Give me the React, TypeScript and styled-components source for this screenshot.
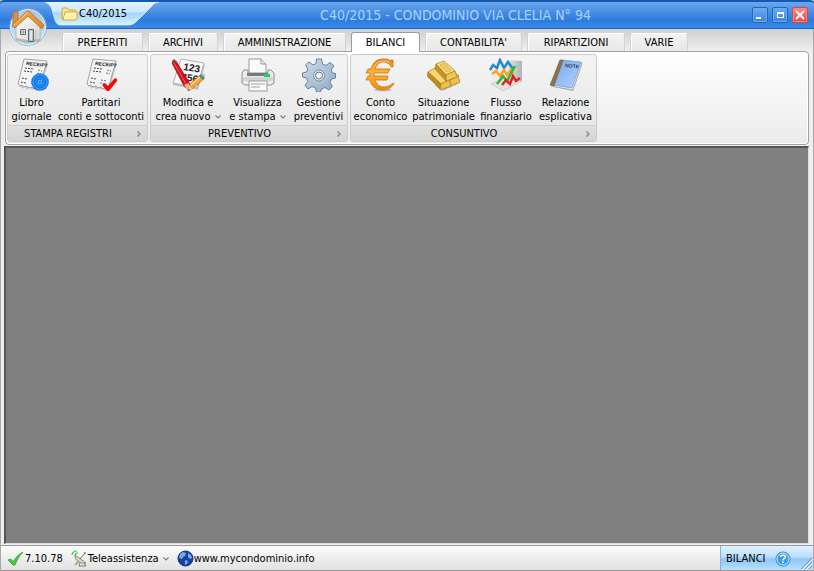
import React from "react";
import styled, { createGlobalStyle, css } from "styled-components";

const GlobalStyle = createGlobalStyle`
  * { box-sizing: border-box; }
  html, body, #root { height: 100%; margin: 0; }
  body {
    background: #efefef;
    color: #000;
    font: 11px/14px "DejaVu Sans Condensed", "Noto Sans", sans-serif;
    overflow: hidden;
  }
  button { font: inherit; color: inherit; border: 0; background: none; padding: 0; margin: 0; }
  a { color: inherit; text-decoration: none; }
  svg { display: block; flex: none; }
`;

const Window = styled.div`
  display: flex;
  flex-direction: column;
  min-height: 100vh;
  border-left: 1px solid #a9a9a9;
  border-right: 1px solid #a9a9a9;
  background: #efefef;
`;

const TitleBar = styled.header`
  position: relative;
  display: flex;
  align-items: center;
  height: 29px;
  margin: 0 -1px;
  padding: 0 6px 0 45px;
  border-top: 2px solid #1458b0;
  border-bottom: 1px solid #1764cc;
  border-radius: 4px 4px 0 0;
  background: linear-gradient(#6ba8ee 0%, #4a90e4 35%, #2d7cdc 70%, #3b8ae8 100%);
`;

const DocumentTab = styled.div`
  position: relative;
  align-self: flex-start;
  flex: none;
  display: flex;
  align-items: center;
  gap: 1px;
  width: 114px;
  height: 23px;
  padding-left: 16px;
`;

const TabShape = styled.svg`
  position: absolute;
  left: 0;
  top: 0;
  z-index: 0;
`;

const DocumentName = styled.span`
  position: relative;
  z-index: 1;
`;

const FolderSlot = styled.span`
  position: relative;
  z-index: 1;
`;

const WindowTitle = styled.h1`
  flex: 1;
  margin: 0;
  color: #a9d1fb;
  font: 400 14px/18px "DejaVu Sans Condensed", sans-serif;
  text-align: center;
  white-space: nowrap;
`;

const WindowControls = styled.div`
  display: flex;
  gap: 4px;
`;

const ControlButton = styled.button<{ $danger?: boolean }>`
  display: grid;
  place-items: center;
  width: 16px;
  height: 16px;
  border: 1px solid ${(p) => (p.$danger ? "#c84a58" : "#2264b8")};
  border-radius: 2px;
  background: ${(p) =>
    p.$danger ? "linear-gradient(#ff8a84, #ee3c3c)" : "linear-gradient(#6cabee, #3884dc)"};
  box-shadow: inset 0 0 0 1px ${(p) => (p.$danger ? "#ff8080" : "#6cabf0")};
`;

const HomeButton = styled.button`
  position: absolute;
  left: 9px;
  top: 6px;
  width: 38px;
  height: 38px;
  z-index: 2;
`;

const TabStrip = styled.nav`
  display: flex;
  align-items: flex-end;
  gap: 5px;
  height: 22px;
  padding-left: 61px;
  background: linear-gradient(#cfcfcf, #efefef);
`;

const RibbonTab = styled.button<{ $width: number; $active?: boolean }>`
  flex: none;
  width: ${(p) => p.$width}px;
  height: 18px;
  border: 1px solid #d2d2d2;
  border-top-color: #fff;
  border-bottom: 0;
  border-radius: 3px 3px 0 0;
  background: linear-gradient(#f2f2f2, #e8e8e8);
  box-shadow: inset 1px 0 #fff;
  text-align: center;
  white-space: nowrap;
  ${(p) =>
    p.$active &&
    css`
      position: relative;
      z-index: 1;
      height: 20px;
      margin-bottom: -1px;
      border-color: #9c9c9c;
      background: #fff;
    `}
`;

const Ribbon = styled.section`
  display: flex;
  gap: 2px;
  margin: 0 4px;
  padding: 2px 1px;
  border: 1px solid #a2a2a2;
  border-radius: 4px;
  background: linear-gradient(#fff, #ebebeb);
  box-shadow: inset 0 0 0 1px #fff;
`;

const Group = styled.div`
  display: flex;
  flex-direction: column;
  border: 1px solid #cbcbcb;
  border-radius: 3px;
  overflow: hidden;
  background: linear-gradient(#f4f4f4, #e5e5e5);
`;

const GroupItems = styled.div`
  display: flex;
  height: 70px;
`;

const Command = styled.button<{ $width: number }>`
  position: relative;
  display: flex;
  flex-direction: column;
  align-items: center;
  gap: 4px;
  width: ${(p) => p.$width}px;
  padding-top: 3px;
  white-space: nowrap;

  & + &::before {
    content: "";
    position: absolute;
    left: 0;
    top: 2px;
    bottom: 3px;
    border-left: 1px solid #bdbdbd;
  }
`;

const CommandLabel = styled.span`
  display: flex;
  flex-direction: column;
  align-items: center;
`;

const LabelLine = styled.span`
  display: flex;
  align-items: center;
  justify-content: center;
  gap: 4px;
`;

const GroupCaption = styled.button`
  display: flex;
  align-items: center;
  height: 16px;
  padding-right: 5px;
  border-top: 1px solid #cdcdcd;
  background: linear-gradient(#e0e0e0, #d4d4d4);
`;

const CaptionText = styled.span`
  flex: 1;
  padding-right: 8px;
`;

const Workspace = styled.main`
  flex: 1;
  margin: 1px 4px 0 3px;
  border: 2px solid #555;
  border-right: 1px solid #ddd;
  border-bottom: 1px solid #ddd;
  background: #808080;
`;

const StatusBar = styled.footer`
  display: flex;
  align-items: stretch;
  justify-content: space-between;
  height: 26px;
  margin-top: 1px;
  border-top: 1px solid #999;
  border-bottom: 1px solid #9a9a9a;
  background: linear-gradient(#fbfbfb, #e2e2e2);
`;

const StatusItems = styled.div`
  display: flex;
  align-items: center;
  gap: 8px;
  padding: 1px 0 0 6px;
`;

const statusEntry = css`
  display: flex;
  align-items: center;
`;
const StatusText = styled.span`${statusEntry}`;
const StatusButton = styled.button`${statusEntry}`;
const StatusLink = styled.a`${statusEntry}`;

const MenuMark = styled.span`
  padding-left: 4px;
`;

const ModulePanel = styled.div`
  display: flex;
  align-items: center;
  width: 93px;
  padding: 1px 0 0 5px;
  border-left: 1px solid #7fb3e6;
  background: linear-gradient(#e0f1ff, #bcdffc 45%, #92c5f7 55%, #b6e0ff);
`;

const HelpButton = styled.button`
  margin-left: auto;
`;

const Grip = styled.svg`
  align-self: flex-end;
  margin-left: 8px;
`;

const Chevron = ({ down = false }: { down?: boolean }) => (
  <svg width="6" height="6" viewBox="0 0 6 6" fill="none" stroke="#808080" strokeWidth="1.2">
    <path d={down ? "M.5 1.5 3 4l2.500-2.500" : "M1.500.5 4 3 1.500 5.500"} />
  </svg>
);

const Folder = () => (
  <svg width="17" height="14" viewBox="0 0 17 14">
    <path d="M1 12V2l1-1h4l2 2h6l1 1v8z" fill="#ffe493" stroke="#d4a32d" />
    <path d="M2 13 4 5h12v7l-1 1z" fill="#fff0a8" stroke="#d9a934" />
    <path d="M4 11 5.500 6.500H15" fill="none" stroke="#fffbdc" />
  </svg>
);

const House = () => (
  <svg width="38" height="38" viewBox="0 0 38 38">
    <defs>
      <linearGradient id="orb" x2="0" y2="1">
        <stop stopColor="#a4c4e8" />
        <stop offset=".45" stopColor="#bcd6f2" />
        <stop offset="1" stopColor="#a9ecff" />
      </linearGradient>
      <linearGradient id="roof" x2="1" y2="1">
        <stop stopColor="#f3ae55" />
        <stop offset="1" stopColor="#d98422" />
      </linearGradient>
      <linearGradient id="wall" x2="1" y2="1">
        <stop stopColor="#ffffff" />
        <stop offset="1" stopColor="#d3d3d0" />
      </linearGradient>
    </defs>
    <circle cx="19" cy="19" r="17.500" fill="url(#orb)" stroke="#eef7ff" />
    <circle cx="19" cy="19" r="18.400" fill="none" stroke="#7aa6d0" strokeWidth=".7" />
    <path d="M7 17 19 6l12 11v16l-13 2-11-3z" fill="url(#wall)" stroke="#a9a9a6" strokeWidth=".8" />
    <path d="m7 30 11 2 13-1v2l-13 2-11-3z" fill="#b5b5b2" />
    <path d="M4 4h5v9l-5 4z" fill="#d8913c" stroke="#a96d25" strokeWidth=".7" />
    <path d="M3 18 18 3h2l15 14-2 4L19 8 6 20z" fill="url(#roof)" stroke="#b87022" strokeWidth=".8" />
    <path d="M5 17 18.500 4.500" stroke="#ffd391" strokeWidth="1" />
    <path d="M11.500 21.500h5v5h-5z" fill="#f2f4f5" stroke="#6a6a6a" />
    <path d="M14 22v4m-2-2h4" stroke="#909090" />
    <path d="M19.500 21.500h5v12h-5z" fill="#b8c3ca" stroke="#63686b" />
    <path d="M22 23v9" stroke="#eef4f7" strokeWidth="1.500" />
    <path d="M27 22v10" stroke="#b9b9b6" />
  </svg>
);

const ReceiptPaper = () => (
  <>
    <path d="m9 2 24 3-8 28-2-2-2 2-2-2-2 1-2-2-3 2-2-3-3 2-1-3-2 1z" fill="#8e8e8e" opacity=".4" />
    <path d="m9 1 23 2-8 28-2-2-3 2-2-2-3 1-2-2-3 1-2-2-2 1-2-2z" fill="#f4f4f4" stroke="#8e8e8e" strokeWidth=".8" />
    <text x="11" y="7" transform="rotate(6 11 7)" fill="#222" fontFamily="Liberation Sans" fontSize="5" fontWeight="700">RECEIPT</text>
    <path d="m10 10 8 1m-9 2 8 1M7 20l5 1m-6 3 5 1" stroke="#444" strokeDasharray="2 1" />
    <path d="m23 12 4 1m-5 2 4 1m-9 6 6 1m-7 2 6 1" stroke="#777" strokeDasharray="2 1" />
  </>
);

const LedgerIcon = () => (
  <svg width="34" height="34" viewBox="0 0 34 34" fill="none">
    <ReceiptPaper />
    <circle cx="25" cy="24" r="8.800" fill="#1178ec" />
    <circle cx="25" cy="24" r="7" stroke="#3a9cff" strokeWidth="1.200" />
    <circle cx="25" cy="24" r="4" stroke="#3492f5" />
    <path d="M23.500 22.500h3v3h-3z" stroke="#5cb2ff" />
  </svg>
);

const CheckedLedgerIcon = () => (
  <svg width="34" height="34" viewBox="0 0 34 34" fill="none">
    <ReceiptPaper />
    <path d="m18 27 3-2 3 3 7-8 2 1v2l-8 10h-2z" fill="#f20a0a" />
  </svg>
);

const EditIcon = () => (
  <svg width="34" height="34" viewBox="0 0 34 34" fill="none">
    <path d="m10 3 24 4-7 25-25-5z" fill="#888" opacity=".45" />
    <path d="m10 1 23 4-7 25-24-5z" fill="#f8f8f8" stroke="#b0b0b0" />
    <g fill="#222" fontFamily="Liberation Sans" fontSize="10" fontWeight="700">
      <text x="12" y="12" transform="rotate(9 12 12)">123</text>
      <text x="10" y="22" transform="rotate(9 10 22)">456</text>
    </g>
    <path d="m1 5 4-2 14 23-1 6-5-4z" fill="#d81020" stroke="#a00818" strokeWidth=".7" />
    <path d="m3 5 12 21" stroke="#ff5a62" />
    <path d="m13 27 5-2v8z" fill="#e8c28e" />
    <path d="m1 5 0-2 2-2 2 2-4 3z" fill="#8b4b30" />
    <path d="m17 33 1-6 11-10 4 4-12 10z" fill="#f1a33c" stroke="#b97421" strokeWidth=".7" />
    <path d="m20 27 9-8" stroke="#ffd47e" strokeWidth="1.500" />
    <path d="m28 18 2-2 4 4-2 2z" fill="#3f8d9d" />
    <path d="m30 16 2-1 2 2v2z" fill="#a4cf8e" />
    <path d="m17 33 1-6 3 4z" fill="#f1d3a0" />
    <path d="m17 33 .5-2 1.500 1z" fill="#4c4038" />
  </svg>
);

const PrinterIcon = () => (
  <svg width="34" height="34" viewBox="0 0 34 34">
    <path d="M8 1h12l5 5v12H8z" fill="#fafafa" stroke="#999" />
    <path d="M20 1v5h5" fill="#e4e4e4" stroke="#999" />
    <path d="M3 12h4v3h20v-3h3l3 3v10l-3 2H4l-3-2V15z" fill="#ececec" stroke="#8e8e8e" />
    <path d="M2 19h30v4H2z" fill="#d2d4d5" />
    <path d="M6 15h21v3H6z" fill="#747b7e" />
    <path d="M23 16h6v3h-6z" fill="#18d653" />
    <path d="M8 23h18v10H8z" fill="#fafafa" stroke="#999" />
    <path d="M10 26h14m-14 3h9" stroke="#a0a0a0" />
  </svg>
);

const GearIcon = () => (
  <svg width="34" height="34" viewBox="0 0 34 34">
    <defs><linearGradient id="steel" x2="1" y2="1">
      <stop stopColor="#d0ddea" /><stop offset="1" stopColor="#8fa8c1" />
    </linearGradient></defs>
    <path d="M14.500 1h5l1 5 3.500 1.500 4-3L32 8l-3 4 1.500 3 3 .5v4.500l-4 1-1.500 3.500 2.500 4-3.500 3.500-4-2.500-3.500 1.500-1 3h-4l-1-4-3.500-1.500-4 2.500L3 27.500l3-4L4.500 20l-4-1v-4l4-1L6 11 3.500 7 7 4l4 3 3-1.500z" fill="url(#steel)" stroke="#66809b" strokeLinejoin="round" />
    <circle cx="17" cy="17.500" r="8" fill="none" stroke="#b9cadb" />
    <circle cx="17" cy="17.500" r="5.500" fill="#dfe8f1" stroke="#7891ac" />
    <circle cx="17" cy="17.500" r="3.500" fill="#f1f1f1" stroke="#5f7792" />
  </svg>
);

const EuroIcon = () => (
  <svg width="34" height="34" viewBox="0 0 34 34">
    <defs><linearGradient id="euro" x2="0" y2="1">
      <stop stopColor="#e98518" /><stop offset=".45" stopColor="#ffb52c" /><stop offset="1" stopColor="#ee8b16" />
    </linearGradient></defs>
    <ellipse cx="19" cy="32" rx="9" ry="1.500" fill="#8d8d8d" opacity=".5" />
    <path d="M29 2v7h-2C25 4 21 4 18 4c-4 1-6 4-7 7h15l-2 4H10v3h14l-1 4H11c2 5 5 7 9 7 3 0 6-1 9-4l1 1c-3 4-7 6-12 6-7-1-11-4-12-10H2l2-4h2v-3H2l2-4h3C9 4 13 1 19 1c3 0 6 0 7 2l1-1z" fill="url(#euro)" stroke="#cf720f" strokeWidth=".8" />
    <path d="M25 4c-8-3-14 1-16 7" fill="none" stroke="#ffdc7c" strokeWidth=".8" />
  </svg>
);

const GoldIcon = () => (
  <svg width="34" height="34" viewBox="0 0 34 34" stroke="#a87b1c" strokeWidth=".7" strokeLinejoin="round">
    <path d="m8 28 19-4 6 1-17 8z" fill="#777" opacity=".4" stroke="none" />
    <path d="m16 11 6-2 10 9-8 4z" fill="#f5d66f" />
    <path d="m23 22 8-4 2 6-10 4z" fill="#efc04a" />
    <path d="m1 14 7-4 14 12-8 4z" fill="#f5d871" />
    <path d="m1 14 13 12-1 5L0 18z" fill="#c08a20" />
    <path d="m14 26 8-4 2 6-11 4z" fill="#efc04a" />
    <path d="m9 6 8-3 11 10-9 4z" fill="#f9df82" />
    <path d="m9 6 10 11v6L8 11z" fill="#c8922a" />
    <path d="m19 17 9-4 2 6-11 4z" fill="#f2c855" />
    <path d="m13 7 4-2 7 7-4 2z" fill="#eccb61" stroke="#d3ab42" />
  </svg>
);

const FlowIcon = () => (
  <svg width="34" height="34" viewBox="0 0 34 34" fill="none">
    <defs><linearGradient id="chartWall"><stop stopColor="#f4f4f4" /><stop offset="1" stopColor="#b2b2b2" /></linearGradient></defs>
    <path d="m4 5 12-3v20L2 26z" fill="#ececec" />
    <path d="m15 2 18 1v20l-18-1z" fill="url(#chartWall)" />
    <path d="m2 26 13-5 18 2-19 10z" fill="#e2e2e2" stroke="#bbb" strokeWidth=".6" />
    <g strokeWidth="2.500">
      <path d="m1 12 3-5 4 3 3-8 4 8 4-6 5 7" stroke="#248cc8" />
      <path d="m3 16 4-3 4 5 4-6 3 5 4-5 2 3" stroke="#ff9f20" />
      <path d="m8 26 6-8 4 5 8-15" stroke="#33b532" />
      <path d="m13 27 4-5 4 4 3-8 3 5 4-3" stroke="#dc2626" />
    </g>
  </svg>
);

const BookIcon = () => (
  <svg width="34" height="34" viewBox="0 0 34 34">
    <defs><linearGradient id="cover" x2="1" y2="1"><stop stopColor="#76a7ec" /><stop offset="1" stopColor="#b4d2fb" /></linearGradient></defs>
    <path d="m4 29 20 4 9-26-3-1z" fill="#777" opacity=".45" />
    <path d="m11 2 22 3-9 27-22-4z" fill="#efefef" stroke="#8f9aa8" strokeWidth=".7" />
    <path d="m13 2 19 2-9 26-19-3z" fill="url(#cover)" stroke="#6f96cf" strokeWidth=".7" />
    <path d="m11 2 3 .4L5 28l-4-1z" fill="#8b7347" stroke="#6f5a36" strokeWidth=".5" />
    <text x="16" y="9" transform="rotate(6 16 9)" fill="#30405c" fontFamily="Liberation Sans" fontSize="5" fontWeight="700">NOTE</text>
  </svg>
);

const CheckIcon = () => (
  <svg width="18" height="16" viewBox="0 0 18 16"><path d="m1 9 3-1 2 3c3-5 6-8 10-10-4 4-6 8-8 13H6z" fill="#4ccc48" stroke="#1f8f24" strokeWidth=".7" /></svg>
);
const SatelliteIcon = () => (
  <svg width="17" height="17" viewBox="0 0 17 17" fill="none">
    <path d="M4 5c0 6 5 9 11 8z" fill="#dedac0" stroke="#77776e" strokeWidth=".8" />
    <path d="m9 9 5-6M9 13l-1 3h7l-2-3" stroke="#77776e" />
    <path d="m4 15 4-4" stroke="#aaa58c" strokeWidth="2" />
    <circle cx="14" cy="3" r="1" fill="#8b8770" />
    <path d="M4 6c0-2 1-3 3-3M1 5c0-2 2-4 5-4" stroke="#39c943" strokeWidth="1.200" />
  </svg>
);
const GlobeIcon = () => (
  <svg width="17" height="17" viewBox="0 0 17 17">
    <circle cx="8.500" cy="8.500" r="7.500" fill="#1741a8" stroke="#0d2c7c" />
    <path d="m3 4 3-2 3 1-1 3-2 1-1 2-3-1zm8-1 3 2 1 3-2 1-2-2zM8 10l3 1-1 3-2 1z" fill="#7fa8e6" />
  </svg>
);
const HelpIcon = () => (
  <svg width="16" height="16" viewBox="0 0 16 16">
    <circle cx="8" cy="8" r="7" fill="#3a9cec" stroke="#2f86cc" />
    <circle cx="8" cy="8" r="6" fill="none" stroke="#d3eeff" />
    <path d="M5.500 6C5.500 3.500 10.500 3.500 10.500 6 10.500 7.500 8 7.500 8 9.500" fill="none" stroke="#fff" strokeWidth="1.500" />
    <path d="M7.200 10.500h1.600V12H7.200z" fill="#fff" />
  </svg>
);

type CommandData = { lines: [string, string]; icon: React.FC; width: number; menu?: boolean };

const tabs = [
  ["PREFERITI", 81], ["ARCHIVI", 70], ["AMMINISTRAZIONE", 123], ["BILANCI", 69],
  ["CONTABILITA'", 97], ["RIPARTIZIONI", 98], ["VARIE", 58],
] as const;

const groups: { caption: string; commands: CommandData[] }[] = [
  { caption: "STAMPA REGISTRI", commands: [
    { lines: ["Libro", "giornale"], icon: LedgerIcon, width: 47 },
    { lines: ["Partitari", "conti e sottoconti"], icon: CheckedLedgerIcon, width: 92 },
  ] },
  { caption: "PREVENTIVO", commands: [
    { lines: ["Modifica e", "crea nuovo"], icon: EditIcon, width: 74, menu: true },
    { lines: ["Visualizza", "e stampa"], icon: PrinterIcon, width: 65, menu: true },
    { lines: ["Gestione", "preventivi"], icon: GearIcon, width: 57 },
  ] },
  { caption: "CONSUNTIVO", commands: [
    { lines: ["Conto", "economico"], icon: EuroIcon, width: 59 },
    { lines: ["Situazione", "patrimoniale"], icon: GoldIcon, width: 67 },
    { lines: ["Flusso", "finanziario"], icon: FlowIcon, width: 58 },
    { lines: ["Relazione", "esplicativa"], icon: BookIcon, width: 61 },
  ] },
];

export default function App() {
  return (
    <>
      <GlobalStyle />
      <Window>
        <TitleBar>
          <HomeButton aria-label="Home"><House /></HomeButton>
          <DocumentTab>
            <TabShape width="114" height="24" viewBox="0 0 114 24">
              <defs><linearGradient id="docTab" x2="0" y2="1">
                <stop stopColor="#e5f4ff" /><stop offset=".4" stopColor="#cce8ff" /><stop offset=".5" stopColor="#a9d4fb" /><stop offset="1" stopColor="#d1f4ff" />
              </linearGradient></defs>
              <path d="M0 0c5 2 7 6 8 11 2 8 3 12 8 12h68c4 0 7-3 10-6L106 5c2-3 5-5 8-5z" fill="url(#docTab)" stroke="#edf8ff" strokeWidth=".7" />
            </TabShape>
            <FolderSlot><Folder /></FolderSlot>
            <DocumentName>C40/2015</DocumentName>
          </DocumentTab>
          <WindowTitle>C40/2015 - CONDOMINIO VIA CLELIA N° 94</WindowTitle>
          <WindowControls>
            <ControlButton aria-label="Riduci a icona"><svg width="10" height="10"><path d="M1 7h5v2H1z" fill="#fff" /></svg></ControlButton>
            <ControlButton aria-label="Ingrandisci"><svg width="10" height="10"><path d="M2 2h7v6H2zm1 2v3h5V4z" fill="#fff" fillRule="evenodd" /></svg></ControlButton>
            <ControlButton $danger aria-label="Chiudi"><svg width="10" height="10"><path d="m1 1 8 8m0-8L1 9" stroke="#fff" strokeWidth="2" /></svg></ControlButton>
          </WindowControls>
        </TitleBar>
        <TabStrip>
          {tabs.map(([label, width]) => (
            <RibbonTab key={label} $width={width} $active={label === "BILANCI"}>{label}</RibbonTab>
          ))}
        </TabStrip>
        <Ribbon>
          {groups.map((group) => (
            <Group key={group.caption}>
              <GroupItems>
                {group.commands.map(({ lines, icon: Icon, width, menu }) => (
                  <Command key={lines[0]} $width={width}>
                    <Icon />
                    <CommandLabel>
                      <LabelLine>{lines[0]}</LabelLine>
                      <LabelLine>{lines[1]}{menu && <Chevron down />}</LabelLine>
                    </CommandLabel>
                  </Command>
                ))}
              </GroupItems>
              <GroupCaption><CaptionText>{group.caption}</CaptionText><Chevron /></GroupCaption>
            </Group>
          ))}
        </Ribbon>
        <Workspace />
        <StatusBar>
          <StatusItems>
            <StatusText><CheckIcon />7.10.78</StatusText>
            <StatusButton><SatelliteIcon />Teleassistenza<MenuMark><Chevron down /></MenuMark></StatusButton>
            <StatusLink href="#"><GlobeIcon />www.mycondominio.info</StatusLink>
          </StatusItems>
          <ModulePanel>
            BILANCI
            <HelpButton aria-label="Aiuto"><HelpIcon /></HelpButton>
            <Grip width="14" height="14"><path d="m2 13 11-11M6 13l7-7m-3 7 3-3" stroke="#8097b1" /><path d="m3 14L14 3M7 14l7-7" stroke="#fff" /></Grip>
          </ModulePanel>
        </StatusBar>
      </Window>
    </>
  );
}
